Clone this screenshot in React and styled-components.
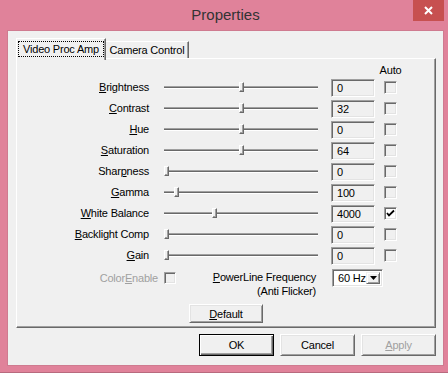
import React from "react";
import styled, { createGlobalStyle } from "styled-components";

const GlobalStyle = createGlobalStyle`
  html, body {
    margin: 0;
    padding: 0;
    background: #fff;
    overflow: hidden;
  }
  body {
    font-family: "Liberation Sans", Arial, sans-serif;
    font-size: 11px;
    letter-spacing: -0.2px;
    color: #000;
  }
  u {
    text-decoration-thickness: 1px;
    text-underline-offset: 1px;
  }
`;

const Window = styled.div`
  width: 448px;
  height: 373px;
  box-sizing: border-box;
  background: #e0829a;
  padding: 0 5px 7px 8px;
  border-bottom: 1px solid #b86a7e;
  display: flex;
  flex-direction: column;
`;

const TitleBar = styled.div`
  height: 31px;
  display: grid;
  grid-template-columns: 1fr auto 1fr;
  align-items: start;
`;

const Title = styled.div`
  grid-column: 2;
  font-size: 15px;
  letter-spacing: 0;
  line-height: 31px;
  color: #333;
  margin-top: -1px;
`;

const CloseButton = styled.div`
  grid-column: 3;
  justify-self: end;
  width: 31px;
  height: 21px;
  margin-right: -1px;
  background: #c75050;
  display: flex;
  align-items: center;
  justify-content: center;
`;

const Client = styled.div`
  flex: 1;
  background: #f0f0f0;
  padding: 7px 7px 0 8px;
  display: flex;
  flex-direction: column;
  box-shadow: 0 0 0 1px #cf7b90;
`;

const TabStrip = styled.div`
  display: flex;
  align-items: flex-end;
  height: 22px;
  margin-bottom: -2px;
  position: relative;
  z-index: 1;
`;

const Tab = styled.div`
  box-sizing: border-box;
  width: ${(p) => (p.$active ? 90 : 83)}px;
  height: ${(p) => (p.$active ? 22 : 17)}px;
  margin-bottom: ${(p) => (p.$active ? 0 : 2)}px;
  background: #f0f0f0;
  border-top: 1px solid #fff;
  border-left: ${(p) => (p.$active ? "1px solid #fff" : "0")};
  border-right: 1px solid #696969;
  box-shadow: inset -1px 0 #a0a0a0;
  display: flex;
  align-items: ${(p) => (p.$active ? "flex-start" : "center")};
  justify-content: center;
  white-space: nowrap;
`;

const FocusRect = styled.span`
  flex: 1;
  height: 16px;
  margin: 2px 1px 0 1px;
  border: 1px dotted #000;
  box-sizing: border-box;
  display: flex;
  align-items: center;
  justify-content: center;
`;

const Panel = styled.div`
  box-sizing: border-box;
  width: 420px;
  border-top: 1px solid #fff;
  border-left: 1px solid #fff;
  border-right: 1px solid #696969;
  border-bottom: 1px solid #696969;
  box-shadow: inset -1px -1px #a0a0a0;
  padding: 4px 0 4px 0;
  display: flex;
  flex-direction: column;
`;

const Grid = styled.div`
  display: grid;
  grid-template-columns: 147px 167px 53px 13px;
  grid-template-rows: 14px repeat(9, 21px) 32px;
  align-items: center;
`;

const AutoHeader = styled.div`
  grid-column: 4;
  justify-self: center;
  line-height: 14px;
  white-space: nowrap;
`;

const Label = styled.div`
  text-align: right;
  padding-right: ${(p) => (p.$pad ? p.$pad : 15)}px;
  white-space: nowrap;
  color: ${(p) => (p.$disabled ? "#a0a0a0" : "#000")};
  align-self: ${(p) => (p.$top ? "start" : "center")};
  margin-top: ${(p) => (p.$top ? 3 : -2)}px;
  line-height: ${(p) => (p.$top ? "18px" : "normal")};
`;

const SliderCell = styled.div`
  display: flex;
  align-items: center;
  padding-right: 13px;
`;

const Track = styled.div`
  position: relative;
  flex: 1;
  height: 1px;
  background: #696969;
  border-top: 1px solid #a0a0a0;
  border-bottom: 1px solid #fff;
`;

const Thumb = styled.div`
  position: absolute;
  top: -5px;
  width: 5px;
  height: 10px;
  box-sizing: border-box;
  background: #f0f0f0;
  border-top: 1px solid #fff;
  border-left: 1px solid #fff;
  border-right: 1px solid #696969;
  border-bottom: 1px solid #696969;
  box-shadow: inset -1px -1px #a0a0a0;
`;

const Sunken = styled.div`
  box-sizing: border-box;
  border-top: 1px solid #a0a0a0;
  border-left: 1px solid #a0a0a0;
  border-right: 1px solid #fff;
  border-bottom: 1px solid #fff;
  box-shadow: inset 1px 1px #696969, inset -1px -1px #e3e3e3;
`;

const ValueBox = styled(Sunken)`
  width: 44px;
  height: 18px;
  background: #f0f0f0;
  padding-left: 5px;
  display: flex;
  align-items: center;
`;

const CheckBox = styled(Sunken)`
  width: ${(p) => p.$size || 13}px;
  height: ${(p) => p.$size || 13}px;
  background: ${(p) => (p.$checked ? "#fff" : "#f0f0f0")};
  display: flex;
  align-items: center;
  justify-content: center;
  flex-shrink: 0;
`;

const BottomCell = styled.div`
  align-self: start;
  display: flex;
  align-items: flex-start;
  padding-right: 15px;
`;

const FreqLabel = styled.div`
  margin-left: auto;
  margin-top: 4px;
  text-align: right;
  line-height: 14px;
  white-space: nowrap;
`;

const Dropdown = styled(Sunken)`
  align-self: start;
  margin-top: 3px;
  margin-left: 1px;
  width: 51px;
  height: 18px;
  background: #fff;
  display: flex;
  align-items: stretch;
  padding: 2px;
`;

const DropText = styled.div`
  flex: 1;
  padding-left: 3px;
  display: flex;
  align-items: center;
`;

const DropButton = styled.div`
  width: 14px;
  box-sizing: border-box;
  background: #f0f0f0;
  border-top: 1px solid #f0f0f0;
  border-left: 1px solid #f0f0f0;
  border-right: 1px solid #696969;
  border-bottom: 1px solid #696969;
  box-shadow: inset 1px 1px #fff, inset -1px -1px #a0a0a0;
  display: flex;
  align-items: center;
  justify-content: center;
`;

const Button = styled.div`
  box-sizing: border-box;
  width: ${(p) => p.$w || 75}px;
  height: ${(p) => p.$h || 22}px;
  background: #f0f0f0;
  border-top: 1px solid ${(p) => (p.$default ? "#000" : "#fff")};
  border-left: 1px solid ${(p) => (p.$default ? "#000" : "#fff")};
  border-right: 1px solid ${(p) => (p.$default ? "#000" : "#696969")};
  border-bottom: 1px solid ${(p) => (p.$default ? "#000" : "#696969")};
  box-shadow: ${(p) =>
    p.$default
      ? "inset 1px 1px #fff, inset -1px -1px #696969, inset -2px -2px #a0a0a0"
      : "inset 1px 1px #e3e3e3, inset -1px -1px #a0a0a0"};
  color: ${(p) => (p.$disabled ? "#a0a0a0" : "#000")};
  display: flex;
  align-items: center;
  justify-content: center;
`;

const DefaultRow = styled.div`
  display: flex;
  justify-content: center;
  margin-top: 6px;
`;

const ButtonRow = styled.div`
  display: flex;
  justify-content: flex-end;
  gap: 6px;
  margin-top: 6px;
  width: 420px;
`;

const rows = [
  { pre: "", key: "B", post: "rightness", value: 0, min: -64, max: 64 },
  { pre: "", key: "C", post: "ontrast", value: 32, min: 0, max: 64 },
  { pre: "", key: "H", post: "ue", value: 0, min: -40, max: 40 },
  { pre: "", key: "S", post: "aturation", value: 64, min: 0, max: 128 },
  { pre: "Shar", key: "p", post: "ness", value: 0, min: 0, max: 6 },
  { pre: "", key: "G", post: "amma", value: 100, min: 72, max: 500 },
  { pre: "", key: "W", post: "hite Balance", value: 4000, min: 2800, max: 6500, auto: true },
  { pre: "", key: "B", post: "acklight Comp", value: 0, min: 0, max: 2 },
  { pre: "", key: "G", post: "ain", value: 0, min: 0, max: 100 },
];

function Check() {
  return (
    <svg width="9" height="9" viewBox="0 0 9 9">
      <polyline points="1,4 3,6.5 8,1.5" fill="none" stroke="#000" strokeWidth="1.8" />
    </svg>
  );
}

export default function App() {
  return (
    <>
      <GlobalStyle />
      <Window>
        <TitleBar>
          <Title>Properties</Title>
          <CloseButton>
            <svg width="9" height="9" viewBox="0 0 9 9">
              <path d="M1 1 L8 8 M8 1 L1 8" stroke="#fff" strokeWidth="2" />
            </svg>
          </CloseButton>
        </TitleBar>
        <Client>
          <TabStrip>
            <Tab $active>
              <FocusRect>Video Proc Amp</FocusRect>
            </Tab>
            <Tab>Camera Control</Tab>
          </TabStrip>
          <Panel>
            <Grid>
              <AutoHeader>Auto</AutoHeader>
              {rows.map((r, i) => {
                const frac = (r.value - r.min) / (r.max - r.min);
                return (
                  <React.Fragment key={i}>
                    <Label>
                      {r.pre}
                      <u>{r.key}</u>
                      {r.post}
                    </Label>
                    <SliderCell>
                      <Track>
                        <Thumb style={{ left: Math.round(frac * 149) }} />
                      </Track>
                    </SliderCell>
                    <ValueBox>{r.value}</ValueBox>
                    <CheckBox $checked={r.auto}>{r.auto && <Check />}</CheckBox>
                  </React.Fragment>
                );
              })}
              <Label $disabled $top $pad={6}>
                Color<u>E</u>nable
              </Label>
              <BottomCell>
                <CheckBox $size={12} style={{ marginTop: 6 }} />
                <FreqLabel>
                  <u>P</u>owerLine Frequency
                  <br />
                  (Anti Flicker)
                </FreqLabel>
              </BottomCell>
              <Dropdown>
                <DropText>60 Hz</DropText>
                <DropButton>
                  <svg width="7" height="4" viewBox="0 0 7 4">
                    <polygon points="0,0 7,0 3.5,4" fill="#000" />
                  </svg>
                </DropButton>
              </Dropdown>
            </Grid>
            <DefaultRow>
              <Button $w={74} $h={19}>
                <span>
                  <u>D</u>efault
                </span>
              </Button>
            </DefaultRow>
          </Panel>
          <ButtonRow>
            <Button $default>OK</Button>
            <Button>Cancel</Button>
            <Button $disabled>
              <span>
                <u>A</u>pply
              </span>
            </Button>
          </ButtonRow>
        </Client>
      </Window>
    </>
  );
}
